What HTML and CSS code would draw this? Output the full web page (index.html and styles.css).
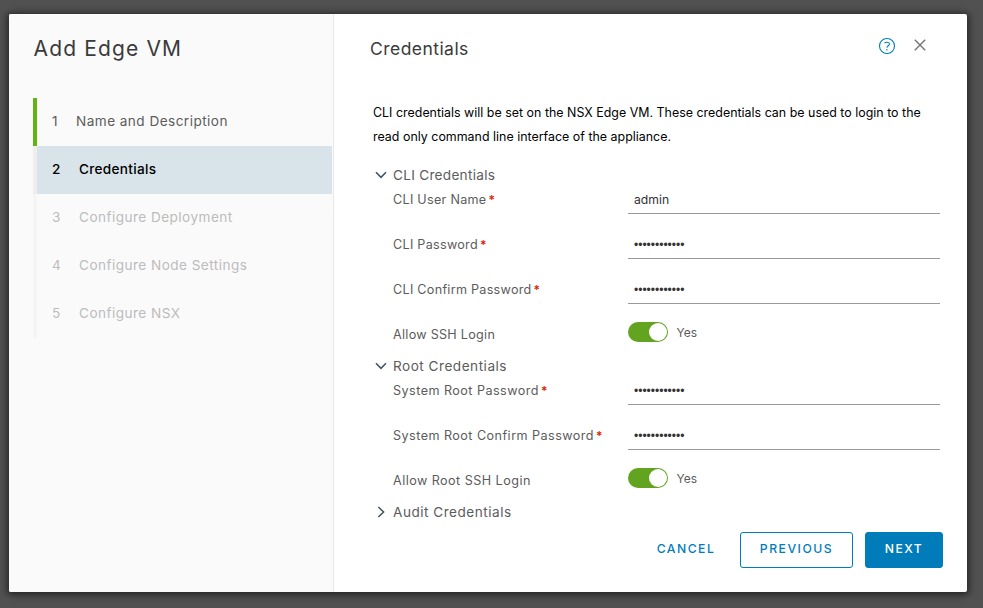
FILE: index.html
```html
<!DOCTYPE html>
<html lang="en">
<head>
<meta charset="utf-8">
<title>Add Edge VM</title>
<link rel="stylesheet" href="styles.css">
</head>
<body>
<div class="modal">
  <aside class="sidebar">
    <h1 class="wizard-title">Add Edge VM</h1>
    <ol class="steps">
      <li class="step done"><span class="num">1</span><span>Name and Description</span></li>
      <li class="step current"><span class="num">2</span><span>Credentials</span></li>
      <li class="step"><span class="num">3</span><span>Configure Deployment</span></li>
      <li class="step"><span class="num">4</span><span>Configure Node Settings</span></li>
      <li class="step"><span class="num">5</span><span>Configure NSX</span></li>
    </ol>
  </aside>
  <main class="content">
    <header class="header">
      <h2 class="page-title">Credentials</h2>
      <svg class="help" viewBox="0 0 18 18"><circle cx="9" cy="9" r="7.5"/><path d="M6.5 6.2C7.8 4.8 11.4 4.7 11.4 7C11.4 8.9 8.9 8.6 8.9 10.8M8.9 12.1V13.4"/></svg>
      <svg class="close" viewBox="0 0 14 14"><path d="M1.8 1.8L12.2 12.2M12.2 1.8L1.8 12.2"/></svg>
    </header>
    <p class="intro">CLI credentials will be set on the NSX Edge VM. These credentials can be used to login to the<br>read only command line interface of the appliance.</p>
    <section>
      <h3 class="section"><svg class="caret" viewBox="0 0 12 12"><path d="M1 3.3L6 8.4L11 3.3"/></svg><span>CLI Credentials</span></h3>
      <div class="row"><div class="label"><span>CLI User Name</span><b class="req">*</b></div><div class="field">admin</div></div>
      <div class="row"><div class="label"><span>CLI Password</span><b class="req">*</b></div><div class="field dots">••••••••••••</div></div>
      <div class="row"><div class="label"><span>CLI Confirm Password</span><b class="req">*</b></div><div class="field dots">••••••••••••</div></div>
      <div class="row short"><div class="label"><span>Allow SSH Login</span></div><span class="toggle"></span><span class="yes">Yes</span></div>
    </section>
    <section class="wide">
      <h3 class="section"><svg class="caret" viewBox="0 0 12 12"><path d="M1 3.3L6 8.4L11 3.3"/></svg><span>Root Credentials</span></h3>
      <div class="row"><div class="label"><span>System Root Password</span><b class="req">*</b></div><div class="field dots">••••••••••••</div></div>
      <div class="row"><div class="label"><span>System Root Confirm Password</span><b class="req">*</b></div><div class="field dots">••••••••••••</div></div>
      <div class="row short"><div class="label"><span>Allow Root SSH Login</span></div><span class="toggle"></span><span class="yes">Yes</span></div>
    </section>
    <section class="wide">
      <h3 class="section"><svg class="caret" viewBox="0 0 12 12"><path d="M3.4 1L8.6 6L3.4 11"/></svg><span>Audit Credentials</span></h3>
    </section>
    <footer class="footer">
      <span class="btn cancel">CANCEL</span>
      <span class="btn previous">PREVIOUS</span>
      <span class="btn next">NEXT</span>
    </footer>
  </main>
</div>
</body>
</html>
```

FILE: styles.css
```css
* { box-sizing: border-box; }
body {
  margin: 0;
  padding: 14px 16px 16px 9px;
  height: 608px;
  overflow: hidden;
  background: #515151;
  font-family: Inter, "Open Sans", sans-serif;
  font-weight: 400;
  color: #5c5c5c;
}
h1, h2, h3, p, ol { margin: 0; padding: 0; font-weight: inherit; }
.modal {
  display: flex;
  width: 958px;
  height: 578px;
  border-radius: 2px;
  overflow: hidden;
  background: #fff;
  box-shadow: 0 1px 7px 2px rgba(0, 0, 0, .55);
}
.sidebar {
  width: 325px;
  padding: 20px 1px 0 24px;
  background: #fafafa;
  border-right: 1px solid #e8e8e8;
}
.wizard-title {
  height: 64px;
  padding-left: .5px;
  font-size: 21px;
  line-height: 30px;
  color: #3a3a3a;
  letter-spacing: 1.15px;
  white-space: nowrap;
}
.steps { list-style: none; }
.step {
  display: flex;
  height: 48px;
  padding-left: 15px;
  border-left: 4px solid #f5f5f5;
  font-size: 13.6px;
  line-height: 46px;
  letter-spacing: .45px;
  color: #bcbcbc;
  white-space: nowrap;
}
.num { width: 27px; }
.step.done { border-color: #60b515; color: #5c5c5c; }
.done .num { width: 24px; }
.step.current {
  border-color: #eee;
  background: #d9e4ea;
  background-clip: padding-box;
  color: #000;
  font-weight: 500;
  letter-spacing: .3px;
}
.content { flex: 1; padding: 21px 24px 0 36px; white-space: nowrap; }
.header { display: flex; height: 66px; }
.page-title { flex: 1; font-size: 17.5px; line-height: 28px; color: #3a3a3a; letter-spacing: .45px; }
.help { width: 18px; height: 18px; margin: 2px 17px 0 0; }
.close { width: 14px; height: 14px; margin: 3px 16px 0 0; }
svg { fill: none; stroke-width: 1.2; }
.help { stroke: #007cbb; stroke-width: 1.1; }
.close { stroke: #747474; stroke-width: 1.4; }
.intro {
  height: 62px;
  padding-left: 3px;
  font-size: 12.4px;
  line-height: 24px;
  letter-spacing: .02px;
  color: #000;
}
.section {
  display: flex;
  align-items: center;
  height: 24px;
  padding-left: 5px;
  font-size: 13.6px;
  letter-spacing: .28px;
}
.caret { width: 12px; height: 12px; margin-right: 6px; stroke: #42515e; stroke-width: 1.5; }
.row { display: flex; height: 45px; padding-left: 23px; font-size: 12.6px; line-height: 25px; }
.row.short { height: 32px; }
.label { width: 235px; letter-spacing: .28px; }
.wide .section { letter-spacing: .5px; }
.wide .label { letter-spacing: .46px; }
.req { margin-left: 2px; color: #e02200; font-size: 12px; font-weight: 600; letter-spacing: 0; }
.field {
  width: 312px;
  height: 27px;
  padding-left: 6px;
  border-bottom: 1px solid #999;
  font-size: 12.2px;
  color: #333;
}
.dots { font-family: "Liberation Sans", sans-serif; font-size: 12px; font-weight: 400; line-height: 27px; }
.toggle {
  display: flex;
  justify-content: flex-end;
  width: 40px;
  height: 20px;
  padding: 1px;
  border-radius: 10px;
  background: #62a420;
}
.toggle::after { content: ""; width: 18px; height: 18px; border-radius: 50%; background: #fff; }
.yes { margin-left: 8.5px; line-height: 21px; font-size: 12px; }
.footer { display: flex; justify-content: flex-end; margin-top: 8px; }
.btn {
  height: 36px;
  border: 1px solid #007cbb;
  border-radius: 3px;
  color: #007cbb;
  font-size: 12.2px;
  font-weight: 500;
  line-height: 32px;
  letter-spacing: 1.5px;
  text-align: center;
}
.cancel { width: 84px; margin-right: 12px; border-color: transparent; }
.previous { width: 113px; margin-right: 12px; }
.next { width: 78px; background: #007cbb; color: #fff; }
```
